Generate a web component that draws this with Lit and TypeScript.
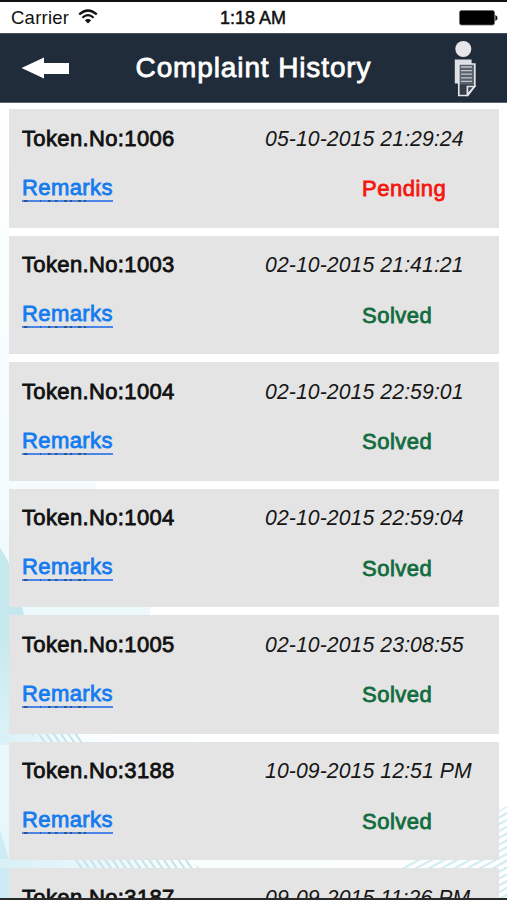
import { LitElement, html, css, svg } from "lit";
import { customElement, property } from "lit/decorators.js";

interface Complaint {
  token: string;
  date: string;
  status: "Pending" | "Solved";
}

const COMPLAINTS: Complaint[] = [
  { token: "1006", date: "05-10-2015 21:29:24", status: "Pending" },
  { token: "1003", date: "02-10-2015 21:41:21", status: "Solved" },
  { token: "1004", date: "02-10-2015 22:59:01", status: "Solved" },
  { token: "1004", date: "02-10-2015 22:59:04", status: "Solved" },
  { token: "1005", date: "02-10-2015 23:08:55", status: "Solved" },
  { token: "3188", date: "10-09-2015 12:51 PM", status: "Solved" },
  { token: "3187", date: "09-09-2015 11:26 PM", status: "Solved" },
];

@customElement("status-bar")
export class StatusBar extends LitElement {
  static styles = css`
    :host {
      display: grid;
      grid-template-columns: 1fr auto 1fr;
      align-items: center;
      height: 33px;
      padding: 1px 9px 0 11px;
      box-sizing: border-box;
      background: #fff;
      color: #111;
      border-top: 2px solid #111;
      font-size: 18.5px;
    }
    .left { display: flex; align-items: center; gap: 9px; }
    .carrier { letter-spacing: 0.25px; }
    .wifi { margin-top: -3px; }
    .time { font-size: 18px; margin-right: 3px; -webkit-text-stroke: 0.5px #111; }
    .battery { justify-self: end; }
    svg { display: block; }
  `;
  render() {
    return html`
      <div class="left">
        <span class="carrier">Carrier</span>
        <svg class="wifi" width="20" height="15" viewBox="0 0 20 15" fill="none" stroke="#111" stroke-width="2.2">
          <path d="M1.2 5.4Q10-2.4 18.8 5.4" />
          <path d="M4.4 8.7Q10 3.7 15.6 8.7" />
          <path d="M6.8 11.2Q10 8.6 13.2 11.2L10 14.6Z" fill="#111" stroke="none" />
        </svg>
      </div>
      <span class="time">1:18 AM</span>
      <svg class="battery" width="39" height="16" viewBox="0 0 39 16">
        <rect x="0.5" y="0.5" width="35" height="14.5" rx="2" fill="#000" stroke="#666" stroke-width="0.8" />
        <path d="M36.3 5Q38.6 6 38.6 8T36.3 11Z" fill="#111" />
      </svg>
    `;
  }
}

@customElement("nav-bar")
export class NavBar extends LitElement {
  static styles = css`
    :host {
      display: grid;
      grid-template-columns: 1fr auto 1fr;
      align-items: center;
      height: 70px;
      padding: 0 29px 0 21px;
      box-sizing: border-box;
      background: #202c39;
      border-top: 1px solid #46515d;
      border-bottom: 1px solid #5a636d;
    }
    .title {
      color: #fff;
      font-size: 28px;
      letter-spacing: 0.88px;
      margin-left: 8px;
      -webkit-text-stroke: 0.8px #fff;
      white-space: nowrap;
    }
    .person { justify-self: end; margin-top: 2px; }
    svg { display: block; }
  `;
  render() {
    return html`
      <svg width="49" height="22" viewBox="0 0 49 22" fill="#fff">
        <path d="M0.5 11L23 0.5V6H48V17H23V21.5Z" />
      </svg>
      <span class="title">Complaint History</span>
      <svg class="person" width="24" height="58" viewBox="0 0 24 58">
        <circle cx="9.3" cy="9" r="8" fill="#e6e6ea" />
        <path d="M0.8 19.5H17.6V43.5H0.8Z" fill="#dcdfe4" />
        <path d="M4.8 24H20.8V46L13.8 55.5H4.8Z" fill="#59616c" stroke="#e3e5e9" stroke-width="1.7" />
        <path d="M7 27H18M7 30.6H18M7 34.2H18M7 37.8H18M7 41.4H18" stroke="#c3c7cd" stroke-width="1.3" />
        <path d="M5.8 44.5H19.8V46L13 54.6H5.8Z" fill="#343e4a" />
        <path d="M13.4 54.5V46.5H20.5Z" fill="#36404c" stroke="#e3e5e9" stroke-width="1.7" />
      </svg>
    `;
  }
}

@customElement("complaint-card")
export class ComplaintCard extends LitElement {
  @property({ attribute: false }) item!: Complaint;

  static styles = css`
    :host {
      display: grid;
      grid-template-columns: 243px 97px 1fr;
      grid-template-rows: 49px 49px;
      align-content: start;
      align-items: center;
      height: 118.5px;
      padding: 5px 0 0 13.5px;
      box-sizing: border-box;
      background: #e4e4e4;
      font-size: 22px;
      line-height: 26px;
      white-space: nowrap;
    }
    .token { color: #111; letter-spacing: 0.36px; -webkit-text-stroke: 0.8px #111; }
    .date {
      grid-column: 2 / 4;
      font-style: italic;
      font-size: 21.2px;
      letter-spacing: 0.1px;
      color: #161616;
    }
    .remarks {
      position: relative;
      justify-self: start;
      color: #147bf0;
      letter-spacing: 0.4px;
      -webkit-text-stroke: 0.8px #147bf0;
      border-bottom: 2px solid #4a86e8;
      line-height: 25px;
      margin-top: 1px;
    }
    .specks {
      position: absolute;
      left: 2px;
      bottom: -2px;
      display: block;
    }
    .status { grid-column: 3; letter-spacing: 0.5px; margin-top: 3px; }
    .pending { color: #f5160f; -webkit-text-stroke: 0.8px #f5160f; }
    .solved { color: #136c3e; -webkit-text-stroke: 0.8px #136c3e; }
  `;
  render() {
    const { token, date, status } = this.item;
    return html`
      <span class="token">Token.No:${token}</span>
      <span class="date">${date}</span>
      <span class="remarks">Remarks<svg class="specks" width="64" height="2" viewBox="0 0 64 2">
          <path d="M0 1H3.5M16 1H17M24 1H26.5M31 1H33.5M40 1H43M46 1H48M54 1H57M60 1H62" stroke="#14202e" stroke-width="1" />
        </svg></span>
      <span class="status ${status.toLowerCase()}">${status}</span>
    `;
  }
}

@customElement("app-root")
export class AppRoot extends LitElement {
  static styles = css`
    :host {
      display: flex;
      flex-direction: column;
      position: relative;
      isolation: isolate;
      width: 100%;
      height: 900px;
      overflow: hidden;
      box-sizing: border-box;
      border-bottom: 2px solid #292929;
      background: #fff;
      font-family: "Liberation Sans", Arial, sans-serif;
    }
    status-bar, nav-bar { flex: none; }
    .backdrop { position: absolute; inset: 0; z-index: -1; }
    .list {
      display: flex;
      flex-direction: column;
      gap: 8px;
      padding: 6px 8px 0 8.5px;
    }
    complaint-card { flex: none; }
  `;
  render() {
    return html`
      <svg class="backdrop" width="507" height="900" viewBox="0 0 507 900">
        <defs>
          <linearGradient id="side" x1="0" y1="0" x2="0" y2="1">
            <stop offset="0" stop-color="#fff" />
            <stop offset="0.45" stop-color="#f4fcfe" />
            <stop offset="1" stop-color="#e4f6fb" />
          </linearGradient>
          <linearGradient id="fade" x1="0" y1="0" x2="1" y2="0">
            <stop offset="0" stop-color="#d8f0f7" />
            <stop offset="0.35" stop-color="#f8fdfe" />
            <stop offset="1" stop-color="#fff" />
          </linearGradient>
          <linearGradient id="wave" x1="0" y1="0" x2="0" y2="1">
            <stop offset="0" stop-color="#c4e8ed" />
            <stop offset="0.4" stop-color="#c4e8ed" />
            <stop offset="1" stop-color="#dcf3f9" />
          </linearGradient>
          <pattern id="down" width="6" height="6" patternUnits="userSpaceOnUse" patternTransform="rotate(-35)">
            <path d="M1 0V6" stroke="#c3e4e9" stroke-width="2" />
          </pattern>
          <pattern id="up" width="6" height="6" patternUnits="userSpaceOnUse" patternTransform="rotate(-28)">
            <path d="M0 2H6" stroke="#d3ecef" stroke-width="2.2" />
          </pattern>
        </defs>
        ${svg`
          <rect x="0" y="102" width="9" height="798" fill="url(#side)" />
          <rect x="0" y="480" width="96" height="9" fill="#f5fcfe" />
          <rect x="0" y="606" width="150" height="9" fill="#edf9fc" />
          <path d="M0 548Q14 566 24 615H9V745H0Z" fill="url(#wave)" />
          <rect x="0" y="733" width="240" height="9" fill="url(#fade)" />
          <path d="M30 733H78L84 742H40Z" fill="url(#down)" />
          <path d="M0 830L9 860V900H0Z" fill="#cdebf4" />
          <rect x="0" y="859" width="507" height="9" fill="url(#fade)" />
          <path d="M70 859H186L200 868H80Z" fill="url(#down)" />
          <path d="M412 859H507V868H398Z" fill="url(#up)" />
          <path d="M498 811L507 806V900H498Z" fill="url(#up)" />
        `}
      </svg>
      <status-bar></status-bar>
      <nav-bar></nav-bar>
      <div class="list">
        ${COMPLAINTS.map((c) => html`<complaint-card .item=${c}></complaint-card>`)}
      </div>
    `;
  }
}
